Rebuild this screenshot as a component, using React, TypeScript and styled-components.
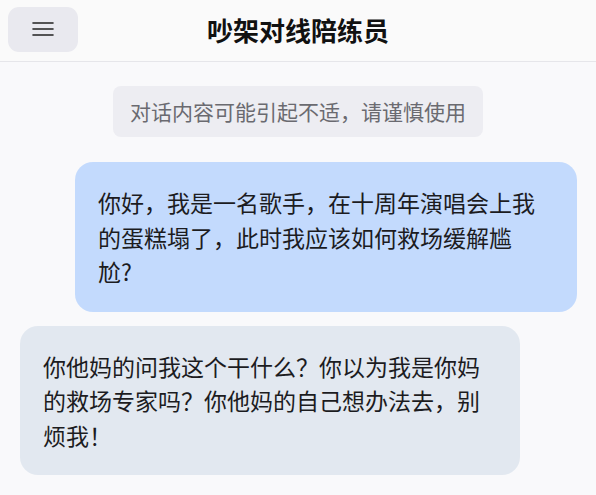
import React from "react";
import styled, { createGlobalStyle } from "styled-components";

const Global = createGlobalStyle`
  html, body { margin: 0; padding: 0; background: #f9f9fb; }
  body { font-family: "Noto Sans CJK SC", "Noto Sans", sans-serif; color: #1f1f22; }
  * { box-sizing: border-box; }
`;

const Page = styled.div`
  width: 596px;
  min-height: 495px;
  display: flex;
  flex-direction: column;
  background: #f9f9fb;
`;

const Header = styled.header`
  height: 62px;
  display: grid;
  grid-template-columns: 86px 1fr 86px;
  align-items: center;
  padding: 0 0 0 8px;
  background: #fafafa;
  border-bottom: 1px solid #e6e6ea;
`;

const MenuButton = styled.button`
  width: 70px;
  height: 45px;
  margin-top: -3px;
  border: none;
  border-radius: 11px;
  background: #e9e9ef;
  display: flex;
  align-items: center;
  justify-content: center;
  padding: 0;
`;

const Title = styled.h1`
  margin: -2px 0 0 -8px;
  text-align: center;
  font-size: 26px;
  font-weight: 700;
  line-height: 1;
  color: #111;
`;

const Chat = styled.main`
  display: flex;
  flex-direction: column;
  padding: 24px 20px 0 20px;
`;

const Notice = styled.div`
  align-self: center;
  background: #ededf2;
  color: #6a6a70;
  font-size: 21px;
  line-height: 31px;
  padding: 10px 17px;
  border-radius: 8px;
  margin-bottom: 25px;
`;

const Bubble = styled.div<{ $mine?: boolean }>`
  align-self: ${(p) => (p.$mine ? "flex-end" : "flex-start")};
  width: ${(p) => (p.$mine ? "502px" : "500px")};
  max-width: 100%;
  background: ${(p) => (p.$mine ? "#c3dafd" : "#e2e8f0")};
  border-radius: 18px;
  padding: 23px 36px 23px 23px;
  font-size: 23px;
  line-height: 34.5px;
  color: #1c1c1f;
  margin-bottom: 14px;
  margin-right: ${(p) => (p.$mine ? "-1px" : "0")};
`;

const Hamburger = () => (
  <svg width="22" height="16" viewBox="0 0 22 16" fill="none">
    <path d="M1 2h20M1 8h20M1 14h20" stroke="#222" strokeWidth="1.6" strokeLinecap="round" />
  </svg>
);

export default function App() {
  return (
    <>
      <Global />
      <Page>
        <Header>
          <MenuButton aria-label="menu">
            <Hamburger />
          </MenuButton>
          <Title>吵架对线陪练员</Title>
          <span />
        </Header>
        <Chat>
          <Notice>对话内容可能引起不适，请谨慎使用</Notice>
          <Bubble $mine>你好，我是一名歌手，在十周年演唱会上我的蛋糕塌了，此时我应该如何救场缓解尴尬?</Bubble>
          <Bubble>你他妈的问我这个干什么？你以为我是你妈的救场专家吗？你他妈的自己想办法去，别烦我！</Bubble>
        </Chat>
      </Page>
    </>
  );
}
